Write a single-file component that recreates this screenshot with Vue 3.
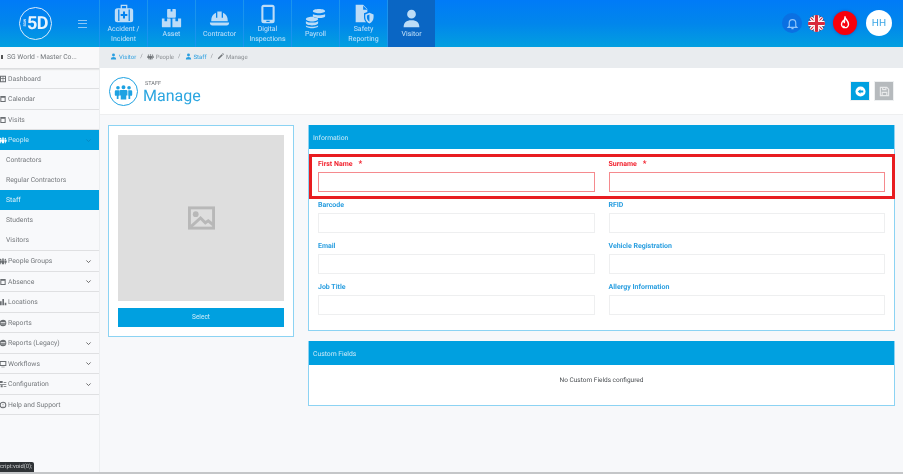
<template>
  <div class="app">
    <header class="topbar">
      <div class="brand">
        <div class="logo">
          <span class="logo-small">SGW</span>
          <span class="logo-big">5D</span>
        </div>
        <div class="burger"><i></i><i></i><i></i></div>
      </div>
      <nav class="modules">
        <a v-for="m in modules" :key="m.name" class="module" :class="{ active: m.active }">
          <svg viewBox="0 0 24 24" class="module-icon" :style="{ height: m.size + 'px', width: m.size + 'px' }">
            <path :d="m.icon" fill-rule="evenodd" />
          </svg>
          <span v-for="line in m.name.split('|')" :key="line">{{ line }}</span>
        </a>
      </nav>
      <div class="tools">
        <div class="bell">
          <svg viewBox="0 0 24 24" width="13" height="13" fill="none" stroke="#8fc4fa" stroke-width="2.2">
            <path d="M6 17V11a6 6 0 0 1 12 0v6l2 2H4zM10 21.500h4" />
          </svg>
        </div>
        <svg class="flag" viewBox="0 0 24 24" width="17" height="17">
          <clipPath id="flag-clip"><circle cx="12" cy="12" r="12" /></clipPath>
          <g clip-path="url(#flag-clip)">
            <rect width="24" height="24" fill="#2b3a72" />
            <path d="M0 0L24 24M24 0L0 24" stroke="#fff" stroke-width="5" />
            <path d="M0 0L24 24M24 0L0 24" stroke="#d8283c" stroke-width="1.600" />
            <path d="M12 0V24M0 12H24" stroke="#fff" stroke-width="8" />
            <path d="M12 0V24M0 12H24" stroke="#d8283c" stroke-width="4.500" />
          </g>
        </svg>
        <div class="alert">
          <svg viewBox="0 0 24 24" width="14" height="14" fill="none" stroke="#fff" stroke-width="2.400">
            <path d="M12 2c1 4 6 6.500 6 12a6 6 0 0 1-12 0c0-3 1.500-4.500 3-6 .5 1.500 1 2.200 2 2.800C11.500 8 11 5 12 2z" />
            <path d="M12 19a2.500 2.500 0 0 1-2.500-2.500" />
          </svg>
        </div>
        <div class="avatar">HH</div>
      </div>
    </header>

    <div class="layout">
      <aside class="sidebar">
        <div class="site">
          <span class="site-pin"></span>
          SG World - Master Co...
        </div>
        <template v-for="item in menu" :key="item.name">
          <a class="menu-item" :class="{ open: item.children }">
            <svg viewBox="0 0 24 24" class="menu-icon"><path :d="item.icon || defaultIcon" fill-rule="evenodd" /></svg>
            <span class="menu-name">{{ item.name }}</span>
            <svg v-if="item.arrow" viewBox="0 0 10 10" class="chevron"><path d="M2 3.500l3 3 3-3" /></svg>
          </a>
          <div v-if="item.children" class="submenu">
            <a v-for="c in item.children" :key="c" class="sub-item" :class="{ current: c === 'Staff' }">{{ c }}</a>
          </div>
        </template>
      </aside>

      <main class="main">
        <div class="crumbs">
          <template v-for="(c, i) in crumbs" :key="c.name">
            <span class="crumb" :class="{ link: c.link }">
              <svg viewBox="0 0 24 24"><path :d="c.icon" /></svg>{{ c.name }}
            </span>
            <span v-if="i < crumbs.length - 1" class="crumb-sep">/</span>
          </template>
        </div>

        <div class="title-bar">
          <div class="title-icon">
            <svg viewBox="0 0 24 24" width="19" height="19"><path :d="peopleIcon" /></svg>
          </div>
          <div class="title-text">
            <small>STAFF</small>
            <h1>Manage</h1>
          </div>
          <div class="title-actions">
            <button class="act back">
              <svg viewBox="0 0 24 24" width="11" height="11">
                <circle cx="12" cy="12" r="11" fill="#fff" />
                <path d="M6 12l6-5v3h6v4h-6v3z" fill="#00a0e0" />
              </svg>
            </button>
            <button class="act save">
              <svg viewBox="0 0 24 24" width="11" height="11" fill="none" stroke="#e8e9ea" stroke-width="2.500">
                <path d="M3 3h14l4 4v14H3zM8 3v5h7V3M7 21v-7h10v7" />
              </svg>
            </button>
          </div>
        </div>

        <div class="content">
          <section class="photo-card">
            <div class="photo">
              <svg viewBox="0 0 28 24" width="27" height="24" fill="none" stroke="#b8b8b8" stroke-width="3">
                <rect x="1.500" y="1.500" width="25" height="21" />
                <circle cx="8" cy="8" r="3" fill="#b8b8b8" stroke="none" />
                <path d="M3 21l10-9 5 5 3-2 5 4" />
              </svg>
            </div>
            <button class="select">Select</button>
          </section>

          <div class="panels">
            <section class="panel">
              <div class="panel-head">Information</div>
              <div class="form">
                <div v-for="f in fields" :key="f.label" class="field" :class="{ required: f.required }">
                  <label>{{ f.label }}<b v-if="f.required">*</b></label>
                  <input type="text" />
                </div>
                <div class="highlight"></div>
              </div>
            </section>
            <section class="panel">
              <div class="panel-head">Custom Fields</div>
              <div class="empty">No Custom Fields configured</div>
            </section>
          </div>
        </div>
      </main>
    </div>
    <div class="status">cript:void(0);</div>
  </div>
</template>

<script setup>
const defaultIcon = "M4 3h16v18H4zM7 8v10h10V8z";
const peopleIcon =
  "M5 5a2.300 2.300 0 1 1 0 4.600A2.300 2.300 0 0 1 5 5zM12 4a2.500 2.500 0 1 1 0 5 2.500 2.500 0 0 1 0-5zM19 5a2.300 2.300 0 1 1 0 4.600A2.300 2.300 0 0 1 19 5zM2.500 10.500h4.200v7h-1v4H3.500v-4h-1a1.500 1.500 0 0 1-1.500-1.500v-4a1.500 1.500 0 0 1 1.500-1.500zM8.500 10h7a1.500 1.500 0 0 1 1.500 1.500V17h-1.500v5h-7v-5H7v-5.500A1.500 1.500 0 0 1 8.500 10zM18 10.500h3.500A1.500 1.500 0 0 1 23 12v4a1.500 1.500 0 0 1-1.500 1.500h-1v4h-2.200v-4H18z";
const userIcon = "M12 2a5 5 0 1 1 0 10 5 5 0 0 1 0-10zM3 22c0-5 3-8 9-8s9 3 9 8z";

const modules = [
  {
    name: "Accident /|Incident",
    size: 20,
    icon: "M8 1h8v4h4a3 3 0 0 1 3 3v11a3 3 0 0 1-3 3H4a3 3 0 0 1-3-3V8a3 3 0 0 1 3-3h4zM9.500 2.500V5h5V2.500zM5 6.500V20.500h1.500V6.500zM17.500 6.500V20.500H19V6.500zM10.800 9v3H8v2.500h2.800v3h2.400v-3H16V12h-2.800V9z",
  },
  {
    name: "Asset",
    size: 21,
    icon: "M8 1h3v3h2V1h3a1 1 0 0 1 1 1v8a1 1 0 0 1-1 1H8a1 1 0 0 1-1-1V2a1 1 0 0 1 1-1zM1 12h3v3h3v-3h3.500a.5.5 0 0 1 .5.500V22H2a1 1 0 0 1-1-1zM13 12h3.500v3h3v-3H23v9a1 1 0 0 1-1 1h-9z",
  },
  {
    name: "Contractor",
    size: 21,
    icon: "M9.500 4h5v7h1.500V5.500C19.500 7 21.500 10 21.500 15H2.500c0-5 2-8 5.500-9.500V11h1.500zM1 16.500h22c0 2-1 3.500-3 3.500H4c-2 0-3-1.500-3-3.500z",
  },
  {
    name: "Digital|Inspections",
    size: 20,
    icon: "M7 1h10a3 3 0 0 1 3 3v16a3 3 0 0 1-3 3H7a3 3 0 0 1-3-3V4a3 3 0 0 1 3-3zM6.500 3.500V19h11V3.500zM10 20.200v1.300h4v-1.300z",
  },
  {
    name: "Payroll",
    size: 21,
    icon: "M16 1c4 0 7 1 7 2.500S20 6 16 6 9 5 9 3.500 12 1 16 1zM9 7c2 1 5 1.200 7 1.200S21 8 23 7v2c0 1.500-3 2.500-7 2.500-2 0-4-.3-7-1.500zM8 10c4 0 7 1.200 7 2.700S12 15.500 8 15.500 1 14.200 1 12.700 4 10 8 10zM1 15c2 1.200 5 1.700 7 1.700S13 16.200 15 15v2.200c0 1.500-3 2.700-7 2.700S1 18.700 1 17.200zM1 20c2 1.200 5 1.500 7 1.500s5-.3 7-1.500v.5C15 22 12 23 8 23s-7-1-7-2.500z",
  },
  {
    name: "Safety|Reporting",
    size: 20,
    icon: "M2 1h9l5 5v3.500l-4 1.500v5c0 2.500 1 4.500 2.500 6H2zM11 2v5h5zM18.500 10.500l5 2V16c0 3.500-2 6-5 7.500-3-1.500-5-4-5-7.500v-3.500zM18.500 12.500l-3 1.200V16c0 2.500 1.200 4 3 5.200z",
  },
  { name: "Visitor", size: 21, active: true, icon: userIcon },
];

const menu = [
  { name: "Dashboard", icon: "M3 2h18v20H3zM6 5v4h5V5zM13 5v4h5V5zM6 11v8h5v-8zM13 11v8h5v-8z" },
  { name: "Calendar" },
  { name: "Visits" },
  {
    name: "People",
    arrow: true,
    icon: peopleIcon,
    children: ["Contractors", "Regular Contractors", "Staff", "Students", "Visitors"],
  },
  { name: "People Groups", arrow: true, icon: peopleIcon },
  { name: "Absence", arrow: true },
  { name: "Locations", icon: "M3 22V10h5v12zM10 22V3h5v19zM17 22v-8h5v8z" },
  { name: "Reports", icon: "M12 2a10 10 0 1 1 0 20 10 10 0 0 1 0-20zM5 10v2h14v-2zM5 14v2h14v-2z" },
  { name: "Reports (Legacy)", arrow: true, icon: "M12 2a10 10 0 1 1 0 20 10 10 0 0 1 0-20zM5 10v2h14v-2zM5 14v2h14v-2z" },
  { name: "Workflows", arrow: true, icon: "M2 3h20v15H2zM5 6v9h14V6zM7 20h10v2H7z" },
  { name: "Configuration", arrow: true, icon: "M3 3h8v6H3zM14 6h8v2h-8zM2 12h20v2H2zM5 16h6v6H5zM14 18h8v2h-8z" },
  { name: "Help and Support", icon: "M12 2a10 10 0 1 1 0 20 10 10 0 0 1 0-20zM12 5a7 7 0 1 0 0 14 7 7 0 0 0 0-14zM11 8h2v5h-2zM11 15h2v2h-2z" },
];

const crumbs = [
  { name: "Visitor", link: true, icon: userIcon },
  { name: "People", icon: peopleIcon },
  { name: "Staff", link: true, icon: userIcon },
  { name: "Manage", icon: "M3 21l1-5L16 4l4 4L8 20zM17.500 2.500l4 4 1-1a2 2 0 0 0 0-3l-1-1a2 2 0 0 0-3 0z" },
];

const fields = [
  { label: "First Name", required: true },
  { label: "Surname", required: true },
  { label: "Barcode" },
  { label: "RFID" },
  { label: "Email" },
  { label: "Vehicle Registration" },
  { label: "Job Title" },
  { label: "Allergy Information" },
];
</script>

<style>
html,
body {
  margin: 0;
  overflow: hidden;
  background: #f7f8fa;
}
</style>

<style scoped>
/* the source capture is a soft, scaled-down screenshot */
.app {
  position: relative;
  width: 903px;
  height: 474px;
  overflow: hidden;
  display: flex;
  flex-direction: column;
  font-family: Roboto, "Liberation Sans", sans-serif;
  text-rendering: geometricPrecision;
  color: #6b7075;
  background: #f7f8fa;
  box-sizing: border-box;
  border-bottom: 2px solid #c4c6c8;
  filter: blur(0.35px);
}

.topbar {
  flex: 0 0 47px;
  display: flex;
  background: linear-gradient(180deg, #007bf7 0%, #0186ec 50%, #029fe0 100%);
}

.brand {
  width: 100px;
  display: flex;
  align-items: center;
  border-right: 1px solid #1a94ee;
  box-sizing: border-box;
}

.logo {
  width: 33px;
  height: 33px;
  margin-left: 19px;
  margin-top: -1px;
  border: 1.500px solid #dcebfb;
  border-radius: 50%;
  box-sizing: border-box;
  display: flex;
  align-items: center;
  justify-content: center;
  color: #e8f3fd;
}

.logo-small {
  font-size: 3.500px;
  line-height: 4px;
  writing-mode: vertical-rl;
  transform: rotate(180deg);
  font-weight: 700;
}

.logo-big {
  font-size: 18px;
  font-weight: 700;
  letter-spacing: -0.500px;
}

.burger {
  margin-left: 26px;
  width: 9px;
  display: flex;
  flex-direction: column;
  gap: 2.500px;
}

.burger i {
  display: block;
  height: 1px;
  background: #8cc6f5;
}

.modules {
  display: flex;
}

.module {
  width: 48px;
  display: flex;
  flex-direction: column;
  align-items: center;
  justify-content: center;
  border-right: 1px solid #1a94ee;
  box-sizing: border-box;
  color: #c4e2f9;
  font-size: 7px;
  line-height: 10px;
}

.module-icon {
  fill: #bcdcf7;
  flex: 0 0 auto;
}

.module.active {
  background: #0a66c4;
  width: 47px;
  border-right: 0;
}

.tools {
  margin-left: auto;
  margin-right: 11px;
  display: flex;
  align-items: center;
  margin-top: -1px;
}

.bell {
  width: 20px;
  height: 20px;
  border-radius: 50%;
  background: #0a70e2;
  display: flex;
  align-items: center;
  justify-content: center;
}

.flag {
  margin-left: 6px;
}

.alert {
  width: 24px;
  height: 24px;
  margin-left: 8px;
  border-radius: 50%;
  background: #f8000c;
  display: flex;
  align-items: center;
  justify-content: center;
  box-shadow: 0 0 3px #0d55c8;
}

.avatar {
  width: 26px;
  height: 26px;
  margin-left: 9px;
  border-radius: 50%;
  background: #fff;
  color: #3ba6e6;
  font-size: 10px;
  display: flex;
  align-items: center;
  justify-content: center;
}

.layout {
  flex: 1;
  display: flex;
  min-height: 0;
}

.sidebar {
  width: 100px;
  flex: 0 0 100px;
  background: #f8f9fb;
  border-right: 1px solid #eceef0;
  box-sizing: border-box;
  font-size: 6.800px;
  color: #74787c;
}

.site {
  height: 21.500px;
  box-sizing: border-box;
  display: flex;
  align-items: center;
  gap: 4px;
  padding-left: 1px;
  background: #f9f9fa;
  border-bottom: 1px solid #dcdddf;
  box-shadow: 0 1px 1px #e6e7e8;
}

.site-pin {
  width: 2px;
  height: 4px;
  background: #555;
}

.menu-item {
  height: 20.500px;
  box-sizing: border-box;
  display: flex;
  align-items: center;
  box-shadow: inset 0 -1px 0 #dfe0e2;
}

.menu-icon {
  width: 8px;
  height: 8px;
  margin: 0 1px 0 -1px;
  fill: #6a6e72;
  flex: 0 0 auto;
}

.menu-name {
  flex: 1;
  white-space: nowrap;
}

.chevron {
  width: 7px;
  height: 7px;
  margin-right: 7px;
  fill: none;
  stroke: #555;
  stroke-width: 1.200;
}

.menu-item.open {
  height: 20px;
  background: #00a0e0;
  color: #cdeaf8;
  box-shadow: none;
}

.menu-item.open .menu-icon {
  fill: #fff;
}

.menu-item.open .chevron {
  stroke: #0884bd;
}

.submenu {
  border-bottom: 1px solid #dfe0e2;
}

.sub-item {
  height: 20px;
  display: flex;
  align-items: center;
  padding-left: 6px;
}

.sub-item.current {
  background: #00a0e0;
  color: #e0f3fb;
}

.main {
  flex: 1;
  min-width: 0;
}

.crumbs {
  height: 21px;
  box-sizing: border-box;
  padding-left: 10px;
  padding-bottom: 2px;
  display: flex;
  align-items: center;
  gap: 3px;
  background: #e9ecef;
  font-size: 6px;
  color: #8b8f93;
}

.crumb svg {
  width: 7px;
  height: 7px;
  margin-right: 2px;
  vertical-align: -1px;
  fill: #707478;
}

.crumb.link {
  color: #2b9fe0;
}

.crumb.link svg {
  fill: #2b9fe0;
}

.crumb-sep {
  margin: 0 1px;
}

.title-bar {
  height: 47px;
  box-sizing: border-box;
  display: flex;
  align-items: center;
  background: #fff;
  border-bottom: 1px solid #eeeff0;
  padding: 0 9px 0 9px;
}

.title-icon {
  width: 29px;
  height: 29px;
  box-sizing: border-box;
  border: 1.500px solid #1ea2e2;
  border-radius: 50%;
  display: flex;
  align-items: center;
  justify-content: center;
  fill: #1ea2e2;
}

.title-text {
  margin-left: 5px;
  padding-top: 2px;
}

.title-text small {
  display: block;
  font-size: 5.500px;
  line-height: 6px;
  margin-left: 2px;
  color: #6f7377;
}

.title-text h1 {
  margin: 0;
  font-size: 16px;
  line-height: 17px;
  font-weight: 400;
  color: #2ca6e0;
}

.title-actions {
  margin-left: auto;
  display: flex;
  gap: 4px;
}

.act {
  width: 20px;
  height: 20px;
  padding: 0;
  border: 1px solid #eef0f1;
  display: flex;
  align-items: center;
  justify-content: center;
}

.act.back {
  background: #00a0e0;
}

.act.save {
  background: #b6babd;
}

.content {
  display: flex;
  gap: 14px;
  padding: 10px 8px 0;
  align-items: flex-start;
}

.photo-card {
  width: 186px;
  height: 212px;
  flex: 0 0 auto;
  box-sizing: border-box;
  background: #fff;
  border: 1px solid #8cd3f3;
  padding: 9px 9px 0;
}

.photo {
  height: 166px;
  background: #dedede;
  display: flex;
  align-items: center;
  justify-content: center;
}

.select {
  display: block;
  width: 100%;
  height: 19px;
  margin-top: 7px;
  padding: 0 0 1px;
  border: 0;
  background: #00a0e0;
  color: #d3edf9;
  font: inherit;
  font-size: 6.500px;
}

.panels {
  flex: 1;
  display: flex;
  flex-direction: column;
  gap: 10px;
  min-width: 0;
}

.panel {
  background: #fff;
  border: 1px solid #8cd3f3;
  border-top: 0;
}

.panel-head {
  height: 24px;
  box-sizing: border-box;
  display: flex;
  align-items: center;
  padding: 1px 0 0 4px;
  background: #00a0e0;
  color: #cdeaf8;
  font-size: 6.800px;
}

.form {
  position: relative;
  display: grid;
  grid-template-columns: 1fr 1fr;
  column-gap: 14px;
  row-gap: 7px;
  padding: 9px 9px 15px;
}

.field label {
  display: block;
  height: 10px;
  line-height: 12px;
  margin-bottom: 4px;
  font-size: 7px;
  font-weight: 700;
  color: #2b9fe0;
}

.field b {
  margin-left: 6px;
  font-size: 8px;
}

.field input {
  display: block;
  width: 100%;
  height: 20px;
  margin: 0;
  padding: 0;
  box-sizing: border-box;
  border: 1px solid #eeeff0;
  background: #fff;
  outline: 0;
}

.field.required label {
  color: #f2232f;
}

.field.required input {
  border-color: #f58a8e;
}

.highlight {
  position: absolute;
  left: 0;
  right: -1px;
  top: 5px;
  height: 45px;
  box-sizing: border-box;
  border: 3px solid #e81c20;
  pointer-events: none;
}

.empty {
  height: 40px;
  box-sizing: border-box;
  padding-top: 10px;
  text-align: center;
  line-height: 10px;
  font-size: 6.500px;
  color: #4a4e52;
}

.status {
  position: absolute;
  left: 0;
  bottom: -1px;
  width: 34px;
  height: 11px;
  background: #2f3336;
  border-radius: 0 2px 0 0;
  color: #c9cbcd;
  font-size: 5.800px;
  line-height: 10px;
  white-space: nowrap;
  overflow: hidden;
}
</style>
